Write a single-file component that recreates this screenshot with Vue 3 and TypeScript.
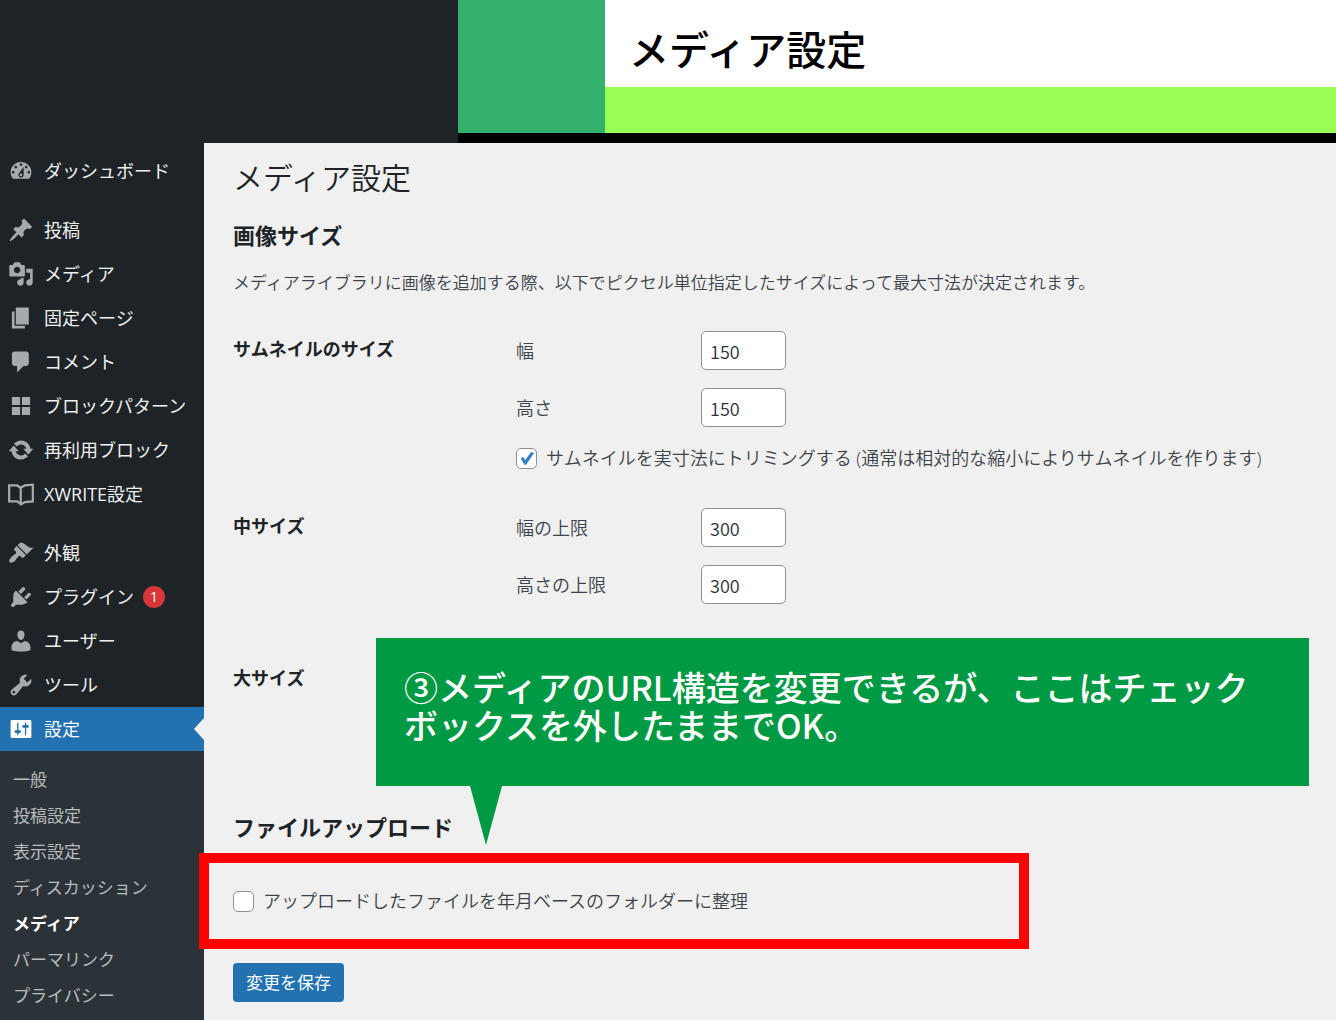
<script setup lang="ts">
import { ref } from 'vue'

interface MenuItem {
  label: string
  icon: string
  outline?: boolean
  badge?: number
  current?: boolean
}

const menuGroups: MenuItem[][] = [
  [
    {
      label: 'ダッシュボード',
      icon: 'M3.76 16h12.48c1.1-1.37 1.76-3.11 1.76-5 0-4.42-3.58-8-8-8s-8 3.58-8 8c0 1.89.66 3.63 1.76 5zM10 4c.55 0 1 .45 1 1s-.45 1-1 1-1-.45-1-1 .45-1 1-1zM6 6c.55 0 1 .45 1 1s-.45 1-1 1-1-.45-1-1 .45-1 1-1zm8 0c.55 0 1 .45 1 1s-.45 1-1 1-1-.45-1-1 .45-1 1-1zm-5.37 5.55L12 7v6c0 1.1-.9 2-2 2s-2-.9-2-2c0-.57.24-1.08.63-1.45zM4 10c.55 0 1 .45 1 1s-.45 1-1 1-1-.45-1-1 .45-1 1-1zm12 0c.55 0 1 .45 1 1s-.45 1-1 1-1-.45-1-1 .45-1 1-1zm-5 3c0-.55-.45-1-1-1s-1 .45-1 1 .45 1 1 1 1-.45 1-1z',
    },
  ],
  [
    {
      label: '投稿',
      icon: 'M10.44 3.02l1.82-1.82 6.36 6.35-1.83 1.82c-1.05-.68-2.48-.57-3.41.36l-.75.75c-.92.93-1.04 2.35-.35 3.41l-1.83 1.82-2.41-2.41-2.8 2.79c-.42.42-3.38 2.71-3.8 2.29s1.86-3.39 2.28-3.81l2.79-2.79L4.1 9.36l1.83-1.82c1.05.69 2.48.57 3.4-.36l.75-.75c.93-.92 1.05-2.35.36-3.41z',
    },
    {
      label: 'メディア',
      icon: 'M13 11V4c0-.55-.45-1-1-1h-1.67L9 1H5L3.67 3H2c-.55 0-1 .45-1 1v7c0 .55.45 1 1 1h10c.55 0 1-.45 1-1zM7 4.5c1.38 0 2.5 1.12 2.5 2.5S8.38 9.5 7 9.5 4.5 8.38 4.5 7 5.62 4.5 7 4.5zM14 6h5v10.5c0 1.38-1.12 2.5-2.5 2.5S14 17.88 14 16.5s1.12-2.5 2.5-2.5c.17 0 .34.02.5.05V9h-3V6zm-4 8.05V13h2v3.5c0 1.38-1.12 2.5-2.5 2.5S7 17.88 7 16.5 8.12 14 9.5 14c.17 0 .34.02.5.05z',
    },
    { label: '固定ページ', icon: 'M6 15V2h10v13H6zm-1 1h8v2H3V5h2v11z' },
    {
      label: 'コメント',
      icon: 'M5 2h9c1.1 0 2 .9 2 2v7c0 1.1-.9 2-2 2h-2l-5 5v-5H5c-1.1 0-2-.9-2-2V4c0-1.1.9-2 2-2z',
    },
    { label: 'ブロックパターン', icon: 'M3 3h6.3v6.3H3zM10.7 3H17v6.3h-6.3zM3 10.7h6.3V17H3zM10.7 10.7H17V17h-6.3z' },
    {
      label: '再利用ブロック',
      icon: 'M10.2 2.6c3.7 0 6.6 2.8 7.1 6.4h2.2l-3.9 4.4L11.7 9h2.4c-.5-1.9-2.1-3.2-4-3.2-1.3 0-2.5.6-3.3 1.6L4.6 5.1C5.9 3.600 8 2.600 10.200 2.600zM9.800 17.400c-3.700 0-6.600-2.800-7.100-6.400H.5l3.900-4.400L8.300 11H5.900c.5 1.900 2.100 3.200 4 3.200 1.300 0 2.500-.6 3.300-1.600l2.200 2.300c-1.300 1.500-3.400 2.500-5.600 2.500z',
    },
    {
      label: 'XWRITE設定',
      icon: 'M9.500 5.200L7 3.400H.900v12.300h6.200l2.900 2.300 2.900-1.800 6.200-.500V2.800l-6.100.600L9.500 5.200zM9.800 5.200V17.800',
      outline: true,
    },
  ],
  [
    {
      label: '外観',
      icon: 'M14.48 11.06L7.41 3.99l1.5-1.5c.5-.56 2.3-.47 3.51.32 1.21.8 1.43 1.28 2.91 2.1 1.18.64 2.45 1.26 4.45.85zm-.71.71L6.7 4.7 4.93 6.47c-.39.39-.39 1.02 0 1.41l1.06 1.06c.39.39.39 1.03 0 1.42-.6.6-1.43 1.11-2.21 1.69-.35.26-.7.53-1.01.84C1.43 14.23.4 16.08 1.4 17.07c.99 1 2.84-.03 4.18-1.36.31-.31.58-.66.85-1.02.57-.78 1.08-1.61 1.69-2.21.39-.39 1.02-.39 1.41 0l1.06 1.06c.39.39 1.02.39 1.41 0z',
    },
    {
      label: 'プラグイン',
      icon: 'M13.11 4.36L9.87 7.6 8 5.73l3.24-3.24c.35-.34 1.05-.2 1.56.32.52.51.66 1.21.31 1.55zm-8 1.77l.91-1.12 9.01 9.01-1.19.84c-.71.71-2.63 1.16-3.82 1.16H6.14L4.9 17.26c-.59.59-1.54.59-2.12 0-.59-.58-.59-1.53 0-2.12l1.24-1.24v-3.88c0-1.13.4-3.19 1.09-3.89zm7.26 3.97l3.24-3.24c.34-.35 1.04-.21 1.55.31.52.51.66 1.21.31 1.55l-3.24 3.25z',
      badge: 1,
    },
    {
      label: 'ユーザー',
      icon: 'M10 9.25c-2.27 0-2.73-3.44-2.73-3.44C7 4.02 7.82 2 9.97 2c2.16 0 2.98 2.02 2.71 3.81 0 0-.41 3.44-2.68 3.44zm0 2.57L12.72 10c2.39 0 4.52 2.33 4.52 4.53v2.49s-3.65 1.13-7.24 1.13c-3.65 0-7.24-1.13-7.24-1.13v-2.49c0-2.25 1.94-4.48 4.47-4.48z',
    },
    {
      label: 'ツール',
      icon: 'M16.68 9.77c-1.34 1.34-3.3 1.67-4.95.99l-5.41 6.52c-.99.99-2.59.99-3.58 0s-.99-2.59 0-3.57l6.52-5.42c-.68-1.65-.35-3.61.99-4.95 1.28-1.28 3.12-1.62 4.72-1.06l-2.89 2.89 2.82 2.82 2.86-2.87c.53 1.58.18 3.39-1.08 4.65zM3.81 16.21c.4.39 1.04.39 1.43 0 .4-.4.4-1.04 0-1.43-.39-.4-1.03-.4-1.43 0-.39.39-.39 1.03 0 1.43z',
    },
    {
      label: '設定',
      icon: 'M18 16V4c0-.55-.45-1-1-1H3c-.55 0-1 .45-1 1v12c0 .55.45 1 1 1h14c.55 0 1-.45 1-1zM8 11h1c.55 0 1 .45 1 1s-.45 1-1 1H8v1.5c0 .28-.22.5-.5.5s-.5-.22-.5-.5V13H6c-.55 0-1-.45-1-1s.45-1 1-1h1V5.5c0-.28.22-.5.5-.5s.5.22.5.5V11zm5-2h-1c-.55 0-1-.45-1-1s.45-1 1-1h1V5.5c0-.28.22-.5.5-.5s.5.22.5.5V7h1c.55 0 1 .45 1 1s-.45 1-1 1h-1v5.5c0 .28-.22.5-.5.5s-.5-.22-.5-.5V9z',
      current: true,
    },
  ],
]

const submenu = ['一般', '投稿設定', '表示設定', 'ディスカッション', 'メディア', 'パーマリンク', 'プライバシー']
const currentSubmenu = 'メディア'

const thumbWidth = ref('150')
const thumbHeight = ref('150')
const cropThumb = ref(true)
const mediumWidth = ref('300')
const mediumHeight = ref('300')
const organizeUploads = ref(false)
</script>

<template>
  <div class="shell">
    <header class="top">
      <div class="banner">
        <div class="banner-accent"></div>
        <div class="banner-body">
          <p class="banner-title">メディア設定</p>
          <div class="banner-stripe"></div>
        </div>
      </div>
    </header>

    <div class="columns">
      <nav class="sidebar" aria-label="メインメニュー">
        <ul v-for="(group, g) in menuGroups" :key="g" class="menu">
          <li v-for="item in group" :key="item.label">
            <a href="#" class="menu-link" :class="{ current: item.current }">
              <svg class="menu-icon" :class="{ outline: item.outline }" viewBox="0 0 20 20" aria-hidden="true">
                <path :d="item.icon" fill-rule="evenodd" />
              </svg>
              <span>{{ item.label }}</span>
              <span v-if="item.badge" class="badge">{{ item.badge }}</span>
            </a>
          </li>
        </ul>
        <ul class="submenu">
          <li v-for="name in submenu" :key="name">
            <a href="#" class="submenu-link" :class="{ active: name === currentSubmenu }">{{ name }}</a>
          </li>
        </ul>
      </nav>

      <main class="content">
        <h1>メディア設定</h1>
        <h2>画像サイズ</h2>
        <p class="description">メディアライブラリに画像を追加する際、以下でピクセル単位指定したサイズによって最大寸法が決定されます。</p>

        <form @submit.prevent>
          <section class="row with-check">
            <h3>サムネイルのサイズ</h3>
            <div class="fields">
              <div class="field">
                <label for="thumb-w">幅</label>
                <input id="thumb-w" v-model="thumbWidth" type="text" inputmode="numeric" />
              </div>
              <div class="field">
                <label for="thumb-h">高さ</label>
                <input id="thumb-h" v-model="thumbHeight" type="text" inputmode="numeric" />
              </div>
              <label class="check">
                <input v-model="cropThumb" type="checkbox" />
                <span>サムネイルを実寸法にトリミングする (通常は相対的な縮小によりサムネイルを作ります)</span>
              </label>
            </div>
          </section>

          <section class="row">
            <h3>中サイズ</h3>
            <div class="fields">
              <div class="field">
                <label for="medium-w">幅の上限</label>
                <input id="medium-w" v-model="mediumWidth" type="text" inputmode="numeric" />
              </div>
              <div class="field">
                <label for="medium-h">高さの上限</label>
                <input id="medium-h" v-model="mediumHeight" type="text" inputmode="numeric" />
              </div>
            </div>
          </section>

          <section class="row large">
            <h3>大サイズ</h3>
            <aside class="callout">
              <p>③メディアのURL構造を変更できるが、ここはチェック<br />ボックスを外したままでOK。</p>
            </aside>
          </section>

          <h2 class="upload-title">ファイルアップロード</h2>
          <div class="highlight">
            <label class="check">
              <input v-model="organizeUploads" type="checkbox" />
              <span>アップロードしたファイルを年月ベースのフォルダーに整理</span>
            </label>
          </div>
          <button type="submit" class="save">変更を保存</button>
        </form>
      </main>
    </div>
  </div>
</template>

<style>
body {
  margin: 0;
  background: #f0f0f0;
}
</style>

<style scoped>
.shell {
  display: flex;
  flex-direction: column;
  min-height: 100vh;
  font-family: 'Open Sans', 'Noto Sans CJK JP', sans-serif;
  font-size: 18px;
  line-height: 26px;
  color: #3c434a;
}

h1,
h2,
h3,
p,
ul {
  margin: 0;
  padding: 0;
}

ul {
  list-style: none;
}

.top {
  display: flex;
  padding-left: 458px;
  background: #1d2327;
}

.banner {
  display: flex;
  flex: 1;
  border-bottom: 10px solid #000;
}

.banner-accent {
  width: 147px;
  background: #33b16d;
}

.banner-body {
  flex: 1;
  background: #fff;
}

.banner-title {
  padding: 18px 24px 9px;
  font-family: 'Noto Sans CJK JP', sans-serif;
  font-size: 40px;
  line-height: 60px;
  font-weight: 500;
  color: #000;
}

.banner-stripe {
  height: 46px;
  background: #99ff55;
}

.columns {
  display: flex;
  flex: 1;
}

.sidebar {
  flex: none;
  box-sizing: border-box;
  width: 204px;
  padding-top: 6px;
  background: #1d2327;
  display: flex;
  flex-direction: column;
}

.menu + .menu {
  margin-top: 15px;
}

.menu-link {
  display: flex;
  align-items: center;
  height: 44px;
  padding-left: 8px;
  color: #f0f0f1;
  text-decoration: none;
  white-space: nowrap;
}

.menu-link.current {
  position: relative;
  background: #2271b1;
  color: #fff;
}

.menu-link.current::after {
  content: '';
  position: absolute;
  right: 0;
  top: 11px;
  width: 10px;
  height: 22px;
  background: #f0f0f0;
  clip-path: polygon(100% 0, 100% 100%, 0 50%);
}

.menu-icon {
  width: 26px;
  height: 26px;
  margin-right: 10px;
  fill: #a7aaad;
}

.menu-icon.outline {
  fill: none;
  stroke: #a7aaad;
  stroke-width: 1.7;
}

.current .menu-icon {
  fill: #fff;
}

.badge {
  width: 22px;
  height: 22px;
  margin-left: 9px;
  border-radius: 50%;
  background: #d63638;
  color: #fff;
  font-size: 14px;
  line-height: 22px;
  text-align: center;
}

.submenu {
  flex: 1;
  padding: 11px 0 17px;
  background: #2c3338;
}

.submenu-link {
  display: block;
  padding-left: 13px;
  font-size: 17px;
  line-height: 36px;
  color: #b9bcbf;
  text-decoration: none;
}

.submenu-link.active {
  color: #fff;
  font-weight: 700;
}

.content {
  flex: 1;
  min-width: 0;
  padding: 15px 27px 18px 29px;
  background: #f0f0f0;
}

h1 {
  font-size: 30px;
  line-height: 40px;
  font-weight: 350;
  color: #1d2327;
}

h2 {
  margin-top: 22px;
  font-size: 22px;
  line-height: 30px;
  font-weight: 700;
  color: #1d2327;
}

.description {
  margin: 20px 0 35px;
  font-size: 17px;
  font-weight: 350;
}

.row {
  display: grid;
  grid-template-columns: 283px 1fr;
  margin-bottom: 56px;
}

.row.with-check {
  margin-bottom: 37px;
}

.row.large {
  position: relative;
  min-height: 96px;
}

h3 {
  padding-top: 5px;
  font-size: 18px;
  line-height: 26px;
  font-weight: 700;
  color: #1d2327;
}

.fields {
  display: flex;
  flex-direction: column;
  gap: 18px;
}

.field {
  display: flex;
  align-items: center;
  font-weight: 350;
}

.field label {
  width: 185px;
}

.field input {
  box-sizing: border-box;
  width: 85px;
  height: 39px;
  padding: 0 8px;
  border: 1px solid #8c8f94;
  border-radius: 5px;
  background: #fff;
  color: #2c3338;
  font-family: 'Noto Sans CJK JP', sans-serif;
  font-size: 18px;
  font-weight: 350;
}

.check {
  display: flex;
  align-items: center;
  gap: 9px;
  font-weight: 350;
}

.check input {
  appearance: none;
  flex: none;
  box-sizing: border-box;
  width: 21px;
  height: 21px;
  margin: 0;
  border: 1px solid #8c8f94;
  border-radius: 5px;
  background: #fff;
}

.check input:checked::before {
  content: '';
  display: block;
  height: 19px;
  background: #3582c4;
  clip-path: polygon(20% 52%, 32% 44%, 43% 61%, 74% 19%, 90% 24%, 48% 86%, 39% 86%);
}

.callout {
  position: absolute;
  top: -22px;
  left: 143px;
  right: 0;
  box-sizing: border-box;
  height: 148px;
  padding: 30px 28px;
  background: #009944;
  color: #fff;
  font-family: 'Noto Sans CJK JP', sans-serif;
  font-size: 34px;
  line-height: 38px;
  font-weight: 500;
}

.callout::after {
  content: '';
  position: absolute;
  top: 100%;
  left: 94px;
  width: 32px;
  height: 59px;
  background: #009944;
  clip-path: polygon(0 0, 100% 0, 50% 100%);
}

.upload-title {
  margin-top: 0;
}

.highlight {
  position: relative;
  box-sizing: border-box;
  max-width: 830px;
  height: 96px;
  margin: 11px 0 14px -34px;
  padding-left: 24px;
  border: 10px solid #ff0000;
  display: flex;
  align-items: center;
}

.save {
  height: 39px;
  padding: 0 13px;
  border: 0;
  border-radius: 4px;
  background: #2271b1;
  color: #fff;
  font: inherit;
  font-size: 17px;
}
</style>
